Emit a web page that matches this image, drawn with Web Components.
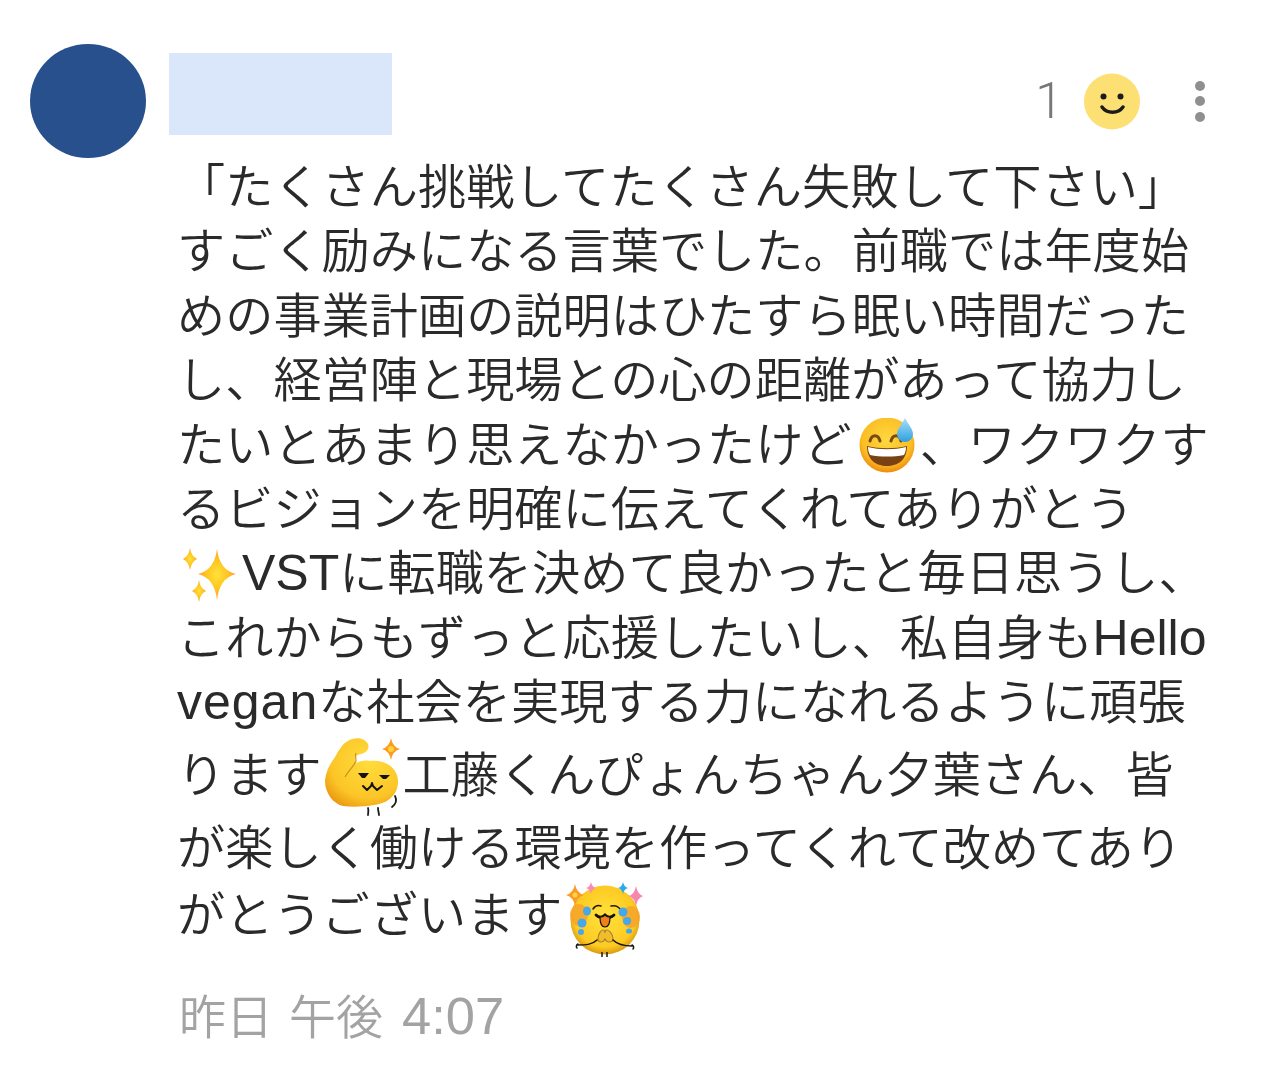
<!DOCTYPE html>
<html lang="ja">
<head>
<meta charset="utf-8">
<title>comment</title>
<style>
  html, body { margin: 0; background: #fff; }
  body { font-family: "Noto Sans CJK JP", "Noto Sans", sans-serif; }
</style>
</head>
<body>
<comment-card>
  <comment-line>「たくさん挑戦してたくさん失敗して下さい」</comment-line>
  <comment-line>すごく励みになる言葉でした。前職では年度始</comment-line>
  <comment-line>めの事業計画の説明はひたすら眠い時間だった</comment-line>
  <comment-line>し、経営陣と現場との心の距離があって協力し</comment-line>
  <comment-line>たいとあまり思えなかったけど<comment-emoji name="sweat"></comment-emoji>、ワクワクす</comment-line>
  <comment-line>るビジョンを明確に伝えてくれてありがとう</comment-line>
  <comment-line><comment-emoji name="sparkles"></comment-emoji><comment-latin>VST</comment-latin>に転職を決めて良かったと毎日思うし、</comment-line>
  <comment-line>これからもずっと応援したいし、私自身も<comment-latin>Hello</comment-latin></comment-line>
  <comment-line><comment-latin style="letter-spacing: 1px">vegan</comment-latin>な社会を実現する力になれるように頑張</comment-line>
  <comment-line style="--h: 80px">ります<comment-emoji name="muscle"></comment-emoji>工藤くんぴょんちゃん夕葉さん、皆</comment-line>
  <comment-line style="--h: 66px">が楽しく働ける環境を作ってくれて改めてあり</comment-line>
  <comment-line style="--h: 68px">がとうございます<comment-emoji name="pray"></comment-emoji></comment-line>
  <span slot="time">昨日 午後 <comment-latin style="--size: 52.500px; margin-left: 3px">4:07</comment-latin></span>
</comment-card>

<script>
const EMOJI = {
  sweat: `<svg width="68" height="60" viewBox="-1 3 68 60">
    <defs>
      <radialGradient id="f" cx="50%" cy="40%" r="60%"><stop offset="0" stop-color="#ffd83f"/><stop offset=".75" stop-color="#fbbd24"/><stop offset="1" stop-color="#ef8a0f"/></radialGradient>
      <linearGradient id="d" x1="0" y1="0" x2="0" y2="1"><stop offset="0" stop-color="#a8e0f8"/><stop offset="1" stop-color="#2f9fe0"/></linearGradient>
    </defs>
    <circle cx="34" cy="30" r="27.500" fill="url(#f)"/>
    <path d="M17 26c2-7 8-7 10 0M38 26c2-7 8-7 10 0" fill="none" stroke="#7a4a12" stroke-width="3" stroke-linecap="round"/>
    <path d="M14 31c12 3 28 3 40 0c0 14-9 20-20 20s-20-6-20-20z" fill="#7a4212"/>
    <path d="M15 32c12 3 26 3 38 0c0 4-1 6-2 8c-10 2-24 2-34 0c-1-2-2-4-2-8z" fill="#fff"/>
    <path d="M52 3c3 6 8 11 8 16a8 8 0 0 1-16 0c0-5 5-10 8-16z" fill="url(#d)"/>
  </svg>`,
  sparkles: `<svg width="65" height="60" viewBox="0 2 65 60">
    <defs><radialGradient id="s"><stop offset="0" stop-color="#ffe23a"/><stop offset=".6" stop-color="#ffc21e"/><stop offset="1" stop-color="#ff9d3a"/></radialGradient></defs>
    <path d="M40 4q2.500 21 19 25q-16.500 4-19 26q-2.500-22-19-26q16.500-4 19-25z" fill="url(#s)"/>
    <path d="M13 3q1.200 8 7 11q-5.800 3-7 11q-1.200-8-7-11q5.800-3 7-11z" fill="url(#s)"/>
    <path d="M22 35q1 8 7 11q-6 3-7 11q-1-8-7-11q6-3 7-11z" fill="url(#s)"/>
  </svg>`,
  muscle: `<svg width="81" height="85" viewBox="12 12 81 85">
    <defs><radialGradient id="m" cx="60%" cy="35%" r="75%"><stop offset="0" stop-color="#ffdd3c"/><stop offset=".7" stop-color="#fcc527"/><stop offset="1" stop-color="#e9980f"/></radialGradient></defs>
    <path d="M15 57C16 47 20 40 25 33C29 26 33 19 38 17C44 13 54 13 58 20C60 25 56 29 51 30C47 31 45 32 45 34C45 36 45 38 46 39C50 37 55 36 60 37C70 36 80 39 85 47C89 53 89 62 85 69C80 77 72 80 64 81C52 83 42 83 33 82C24 80 15 70 15 57z" fill="url(#m)"/>
    <path d="M35 53C39 46 44 42 46 37C46 34 45 31 46 29" fill="none" stroke="#c8931c" stroke-width="1.200"/>
    <path d="M48 49h11l-4 5h-3zM69 51h11l-4 4h-3z" fill="#15120c"/>
    <path d="M53 62l4 4l4-4l1-3l1 3l4 4l5-4" fill="none" stroke="#15120c" stroke-width="2" stroke-linecap="round" stroke-linejoin="round"/>
    <path d="M85 72c2 4 1 8-3 11M58 84c1 3 0 5 0 7M68 84c0 3 1 5 1 7" fill="none" stroke="#1b1b1b" stroke-width="1.800" stroke-linecap="round"/>
    <path d="M81 14q1.500 9 9 11q-7.500 2-9 11q-1.500-9-9-11q7.500-2 9-11z" fill="#fc9c1e"/>
    <circle cx="81" cy="25" r="3" fill="#ffd23a"/>
  </svg>`,
  pray: `<svg width="85" height="90" viewBox="13 9 85 90">
    <defs><radialGradient id="p" cx="50%" cy="45%" r="55%"><stop offset="0" stop-color="#ffe23c"/><stop offset=".8" stop-color="#fdca22"/><stop offset="1" stop-color="#d99a10"/></radialGradient></defs>
    <circle cx="55" cy="56" r="34.500" fill="url(#p)"/>
    <ellipse cx="29" cy="51" rx="9" ry="11" fill="#f6a32c" opacity=".85"/><ellipse cx="81" cy="53" rx="9" ry="11" fill="#f6a32c" opacity=".85"/>
    <path d="M43 45c2-3 5-4 8-3M61 42c4-1 8 1 10 4" fill="none" stroke="#25190a" stroke-width="1.500" stroke-linecap="round"/>
    <path d="M46 51c3 3 6 3 9 0c3 3 6 3 9 0" fill="none" stroke="#17120a" stroke-width="2.800" stroke-linecap="round"/>
    <path d="M50 53c2 0 4-1 5-2c1 1 3 2 5 2c0 6-2 10-5 10s-5-4-5-10z" fill="#f0801e" stroke="#17120a" stroke-width="1.200"/>
    <g fill="#46a8e8"><ellipse cx="37" cy="47" rx="4" ry="4.500"/><ellipse cx="32" cy="59" rx="4.500" ry="4.500"/><ellipse cx="31" cy="68" rx="3" ry="3"/><ellipse cx="73" cy="48" rx="4.500" ry="4.500"/><ellipse cx="77" cy="57" rx="4" ry="4"/><ellipse cx="79" cy="67" rx="3" ry="2.600"/></g>
    <path d="M48 75c0-5 3-9 5-9c1 0 2 1 2 3c0-2 1-3 2-3c2 0 6 4 6 9c0 2-2 3-4 3c-2 0-3-1-4-3c-1 2-2 3-4 3c-2 0-3-1-3-3z" fill="#f2bd2a" stroke="#a98432" stroke-width="1.200"/>
    <path d="M28 81c7 0 14 0 19-5M82 82c-7 0-14-1-19-6M28 80c-2 1-2 3-1 4M82 81c2 1 2 3 1 4" fill="none" stroke="#1a160e" stroke-width="1.500" stroke-linecap="round"/>
    <path d="M52 88v5M57 88v5" stroke="#1a160e" stroke-width="1.500"/>
    <path d="M25 20q1.500 9 9 11q-7.500 2-9 11q-1.500-9-9-11q7.500-2 9-11z" fill="#fb9a24"/><circle cx="25" cy="31" r="2.500" fill="#ffd546"/>
    <path d="M41 18q1 5 5 6q-4 1-5 6q-1-5-5-6q4-1 5-6z" fill="#f88cb4"/>
    <path d="M73 18q1 5 5 6q-4 1-5 6q-1-5-5-6q4-1 5-6z" fill="#2fa8e4"/>
    <path d="M86 22q1.500 8 7 10q-5.500 2-7 10q-1.500-8-7-10q5.500-2 7-10z" fill="#f887b0"/>
  </svg>`
};

class CommentEmoji extends HTMLElement {
  connectedCallback() {
    this.attachShadow({ mode: 'open' });
    this.shadowRoot.innerHTML = `
      <style>
        :host { display: inline-block; vertical-align: middle; margin: -24px 0; line-height: 0; }
      </style>
      ${EMOJI[this.getAttribute('name')]}
    `;
  }
}

class CommentLatin extends HTMLElement {
  connectedCallback() {
    this.attachShadow({ mode: 'open' });
    // no whitespace next to the slot, the host is inline
    this.shadowRoot.innerHTML = `<style>:host { font-family: "Liberation Sans", sans-serif; font-size: var(--size, 50px); }</style><slot></slot>`;
  }
}

class CommentLine extends HTMLElement {
  connectedCallback() {
    this.attachShadow({ mode: 'open' });
    this.shadowRoot.innerHTML = `
      <style>
        :host { display: block; height: var(--h, 64.4px); line-height: var(--h, 64.4px); white-space: nowrap; }
      </style>
      <slot></slot>
    `;
  }
}

class CommentCard extends HTMLElement {
  connectedCallback() {
    this.attachShadow({ mode: 'open' });
    this.shadowRoot.innerHTML = `
      <style>
        :host { display: block; box-sizing: border-box; width: 1269px; height: 1092px; padding: 44px 0 0 30px; background: #fff; overflow: hidden; }
        .head { display: flex; align-items: flex-start; height: 107px; }
        .avatar { width: 116px; height: 114px; border-radius: 50%; background: #27508c; flex: none; }
        .name { width: 223px; height: 82px; margin: 9px 0 0 23px; background: #dae6f9; flex: none; }
        .actions { display: flex; align-items: center; height: 114px; margin-left: auto; padding-right: 64px; }
        .count { font: 300 50px/1 Roboto, sans-serif; color: #777; margin-right: 21px; }
        .smile { display: block; margin-right: 55px; }
        .more { display: flex; flex-direction: column; gap: 5.500px; }
        .more i { width: 10px; height: 10px; border-radius: 50%; background: #8f8f8f; }
        .body { margin-left: 147px; font-size: 48.200px; font-weight: 350; color: #2a2a2a; filter: blur(.5px); }
        .time { margin: 37px 0 0 149px; font-size: 47px; font-weight: 350; word-spacing: 5.500px; line-height: 64px; color: #a3a3a3; white-space: nowrap; filter: blur(.5px); }
      </style>
      <div class="head">
        <div class="avatar"></div>
        <div class="name"></div>
        <div class="actions">
          <span class="count">1</span>
          <svg class="smile" width="56" height="57" viewBox="0 0 56 57">
            <circle cx="28" cy="28.500" r="28" fill="#fde074"/>
            <circle cx="19.500" cy="23.500" r="3" fill="#1b1b1b"/>
            <circle cx="36.500" cy="23.500" r="3" fill="#1b1b1b"/>
            <path d="M18 34c5 7 16 7 21 0" fill="none" stroke="#1b1b1b" stroke-width="3.500" stroke-linecap="round"/>
          </svg>
          <div class="more"><i></i><i></i><i></i></div>
        </div>
      </div>
      <div class="body"><slot></slot></div>
      <div class="time"><slot name="time"></slot></div>
    `;
  }
}

customElements.define('comment-emoji', CommentEmoji);
customElements.define('comment-latin', CommentLatin);
customElements.define('comment-line', CommentLine);
customElements.define('comment-card', CommentCard);
</script>
</body>
</html>
